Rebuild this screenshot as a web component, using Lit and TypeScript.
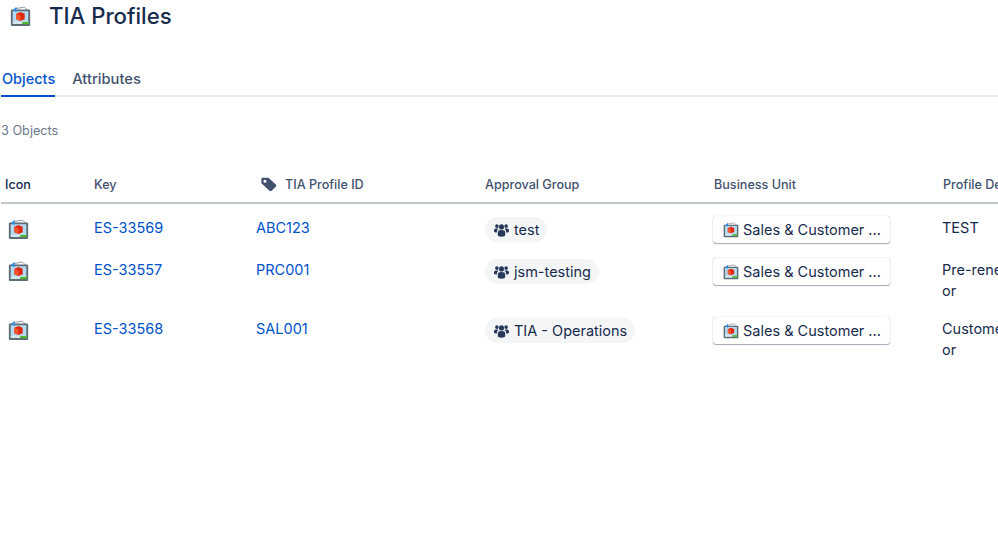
import { LitElement, html, css } from "lit";
import { customElement } from "lit/decorators.js";

const cube = (size: number) => html`<svg class="cube" width=${size} height=${size} viewBox="0 0 20 20">
  <path d="M5 2.6 L13.6 1 L17 4" fill="none" stroke="#8a949c" stroke-width="0.9"/>
  <rect x="0.8" y="3.4" width="18.4" height="15.6" rx="1.2" fill="#5d6d76"/>
  <rect x="2.6" y="5" width="14.8" height="12" fill="#b5dbf3"/>
  <rect x="2.6" y="15" width="14.8" height="2" fill="#dbe8ef"/>
  <path d="M6 7.4 L10 5.8 L14 7.4 V12.6 L10 14.2 L6 12.6 Z" fill="#e2290f"/>
  <path d="M6 7.4 L10 9 V14.2 L6 12.6 Z" fill="#f4552a"/>
  <path d="M3 3.6 L6.2 0.8 V6.2 Z" fill="#2b8eea"/>
  <rect x="11.6" y="15.2" width="6.4" height="2.1" fill="#4fb52a"/>
</svg>`;

const people = html`<svg width="15" height="14" viewBox="0 0 15 13" preserveAspectRatio="none" fill="#253858">
  <circle cx="7.5" cy="3.6" r="2.5"/><circle cx="2.9" cy="2.9" r="1.8"/><circle cx="12.1" cy="2.9" r="1.8"/>
  <path d="M3.8 9 C3.8 7 5 6.4 7.5 6.4 C10 6.4 11.2 7 11.2 9 V11 C11.2 12.4 9.8 12.8 7.5 12.8 C5.2 12.8 3.8 12.4 3.8 11 Z"/>
  <path d="M0 6.6 C0 5.4 1 5 2.9 5 C3.6 5 4.1 5.1 4.5 5.3 C3.4 6 2.9 7 2.8 8.9 C1 8.8 0 8.4 0 7.6 Z"/>
  <path d="M15 6.6 C15 5.4 14 5 12.1 5 C11.4 5 10.9 5.1 10.5 5.3 C11.6 6 12.1 7 12.2 8.9 C14 8.8 15 8.4 15 7.6 Z"/>
</svg>`;

const tag = html`<svg width="16" height="15" viewBox="0 0 17 15" fill="#42526e">
  <path fill-rule="evenodd" d="M1.6 0.4 H7.6 C8.1 0.4 8.5 0.6 8.9 1 L15.7 7.6 C16.4 8.3 16.4 9.3 15.7 10 L11.4 14.2 C10.7 14.9 9.7 14.9 9 14.2 L1 6.6 C0.6 6.2 0.4 5.8 0.4 5.3 V1.6 C0.4 0.9 0.9 0.4 1.6 0.4 Z M4.2 2.4 A1.6 1.6 0 1 0 4.2 5.6 A1.6 1.6 0 1 0 4.2 2.4 Z"/>
</svg>`;

const rows = [
  { key: "ES-33569", id: "ABC123", group: "test", desc: ["TEST"], cls: "r1" },
  { key: "ES-33557", id: "PRC001", group: "jsm-testing", desc: ["Pre-renewal", "or"], cls: "r2" },
  { key: "ES-33568", id: "SAL001", group: "TIA - Operations", desc: ["Customer", "or"], cls: "r3" },
];

@customElement("app-root")
export class AppRoot extends LitElement {
  static styles = css`
    :host { display: block; width: 998px; height: 544px; overflow: hidden; background: #fff;
      font-family: Inter, "Noto Sans", sans-serif; color: #172b4d; }
    .title { display: flex; align-items: center; height: 32px; gap: 18px; padding-left: 10px; }
    .title h1 { margin: 0; font-size: 22.2px; font-weight: 500; color: #172b4d; line-height: 32px; }
    .tabs { display: flex; gap: 17px; margin: 30px 0 0 1px; height: 33px; border-bottom: 2px solid #ebecf0; }
    .tab { font-size: 14.7px; font-weight: 500; color: #42526e; line-height: 34px; height: 33px; }
    .tab.on { color: #0052cc; border-bottom: 2px solid #0052cc; padding-left: 1px; font-size: 14.5px; }
    .count { margin: 25px 0 0 1px; font-size: 12.7px; line-height: 18px; color: #6b778c; }
    .grid { display: grid; grid-template-columns: 90px 162px 229px 229px 229px 59px; margin-left: 1px; width: 997px; }
    .head { height: 64px; display: flex; align-items: flex-end; padding: 0 0 8px 3px; box-sizing: border-box;
      font-size: 12.6px; font-weight: 500; line-height: 18px; color: #42526e; border-bottom: 2px solid #c1c7d0; white-space: nowrap; }
    .head.first { color: #172b4d; padding-left: 4px; }
    .head.tagged { gap: 8px; padding-left: 8px; }
    .head.tagged svg { margin-bottom: 2px; }
    .cell { font-size: 14.5px; line-height: 20px; box-sizing: border-box; white-space: nowrap; }
    .r1 { height: 42px; } .r2 { height: 59px; } .r3 { height: 59px; }
    .link { color: #0052cc; padding: 14px 0 0 3px; }
    .ic { padding: 15px 0 0 7px; }
    .chipcell { padding: 13px 0 0 3px; }
    .chip { display: inline-flex; align-items: center; gap: 5px; height: 25px; padding: 0 8px 0 9px; border-radius: 13px; background: #f4f5f7; }
    .btncell { padding: 12px 0 0 2px; }
    .btn { display: flex; align-items: center; gap: 4px; width: 177px; height: 27px; padding-left: 10px; box-sizing: border-box;
      background: #fff; border-radius: 3px; box-shadow: 0 0 1px rgba(9,30,66,.45), 0 1px 1px rgba(9,30,66,.35); }
    .desc { line-height: 21px; padding: 13px 0 0 2px; overflow: hidden; }
    .cube { display: block; flex: none; }
  `;

  render() {
    return html`
      <div class="title">${cube(21)}<h1>TIA Profiles</h1></div>
      <div class="tabs"><div class="tab on">Objects</div><div class="tab">Attributes</div></div>
      <div class="count">3 Objects</div>
      <div class="grid">
        <div class="head first">Icon</div>
        <div class="head">Key</div>
        <div class="head tagged">${tag}TIA Profile ID</div>
        <div class="head">Approval Group</div>
        <div class="head">Business Unit</div>
        <div class="head">Profile Description</div>
        ${rows.map((r) => html`
          <div class="cell ic ${r.cls}">${cube(21)}</div>
          <div class="cell link ${r.cls}">${r.key}</div>
          <div class="cell link ${r.cls}">${r.id}</div>
          <div class="cell chipcell ${r.cls}"><span class="chip">${people}<span>${r.group}</span></span></div>
          <div class="cell btncell ${r.cls}"><div class="btn">${cube(16)}<span>Sales &amp; Customer ...</span></div></div>
          <div class="cell desc ${r.cls}">${r.desc.map((d) => html`<div>${d}</div>`)}</div>
        `)}
      </div>
    `;
  }
}
